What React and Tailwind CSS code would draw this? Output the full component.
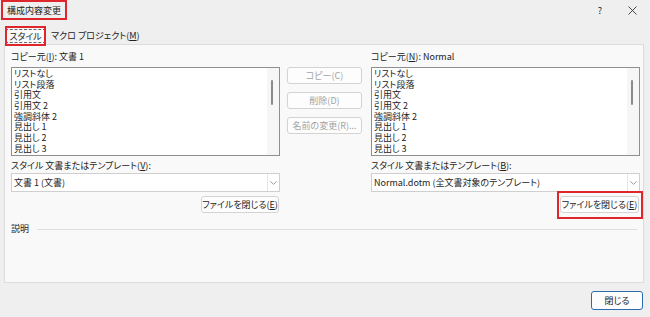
import React from 'react';

const items = ['リストなし', 'リスト段落', '引用文', '引用文 2', '強調斜体 2', '見出し 1', '見出し 2', '見出し 3'];

const StyleList = () => (
  <div className="mt-[4px] h-[89px] border border-[#8e8e8e] bg-white flex">
    <div className="flex-1 pl-[2px] pt-[1px] overflow-hidden">
      {items.map((it) => (
        <div key={it} className="h-[10.7px] leading-[10.7px] whitespace-nowrap">{it}</div>
      ))}
    </div>
    <div className="w-[12px] bg-[#f6f6f6] pl-[4px] pt-[12px]">
      <div className="w-[2px] h-[25px] bg-[#8a8a8a] rounded-full"></div>
    </div>
  </div>
);

const Combo = ({ value }) => (
  <div className="mt-[1px] h-[19px] border border-[#cfcfcf] bg-white flex">
    <div className="flex-1 pl-[2px] leading-[17px] whitespace-nowrap">{value}</div>
    <div className="w-[12px] border-l border-[#e4e4e4] flex items-center justify-center">
      <svg width="7" height="4" viewBox="0 0 7 4" fill="none" stroke="#8d8d8d" strokeWidth="0.9">
        <path d="M0.5 0.5 L3.5 3.3 L6.5 0.5" />
      </svg>
    </div>
  </div>
);

const Btn = ({ children, disabled, className = '' }) => (
  <div
    className={`h-[17px] border border-[#d3d3d3] bg-[#fdfdfd] rounded-[3px] flex items-center justify-center leading-none whitespace-nowrap ${
      disabled ? 'text-[#a3a3a3]' : 'text-[#1b1b1b]'
    } ${className}`}
  >
    {children}
  </div>
);

const App = () => {
  return (
    <div className="w-[650px] h-[317px] bg-[#efefef] flex flex-col text-[9px] text-[#222] font-['Noto_Sans_CJK_JP',sans-serif] [font-feature-settings:'palt']">
      {/* タイトルバー */}
      <div className="h-[22px] flex items-start">
        <div className="ml-[1px] h-[20px] border-2 border-[#e0262d] px-[4px] flex items-center leading-none">
          構成内容変更
        </div>
        <div className="ml-auto flex items-center h-[20px]">
          <span className="text-[9px] leading-none">?</span>
          <svg className="ml-[26px] mr-[13px]" width="9" height="9" viewBox="0 0 9 9" stroke="#333" strokeWidth="0.9">
            <path d="M0.5 0.5 L8.5 8.5 M8.5 0.5 L0.5 8.5" />
          </svg>
        </div>
      </div>

      {/* タブ */}
      <div className="h-[22px] flex items-end pl-[5px]">
        <div className="relative z-10 -mb-[1px] w-[41px] h-[19px] bg-[#f9f9f9] border border-b-0 border-[#dadada] flex items-center justify-center">
          <div className="border border-dashed border-[#666] px-[3px] h-[14px] flex items-center leading-none whitespace-nowrap">スタイル</div>
          <div className="absolute -left-[1px] -right-[1px] -top-[1px] -bottom-[1px] border-2 border-[#e0262d]"></div>
        </div>
        <div className="ml-[2px] h-[17px] px-[3px] flex items-center leading-none whitespace-nowrap">
          マクロ プロジェクト(<span className="underline">M</span>)
        </div>
      </div>

      {/* パネル */}
      <div className="mx-[4px] w-[640px] h-[239px] border border-[#dcdcdc] bg-[#f9f9f9] pl-[6px] flex flex-col">
        <div className="flex items-start">
          <div className="w-[269px] flex flex-col">
            <div className="mt-[6px] h-[12px] leading-[12px]">
              コピー元(<span className="underline">I</span>): 文書 1
            </div>
            <StyleList />
            <div className="mt-[4px] h-[12px] leading-[12px]">
              スタイル 文書またはテンプレート(<span className="underline">V</span>):
            </div>
            <Combo value="文書 1 (文書)" />
            <Btn className="mt-[4px] w-[78px] self-end mr-[1px]">
              ファイルを閉じる(<span className="underline">E</span>)
            </Btn>
          </div>

          <div className="ml-[7px] w-[75px] mt-[22px] flex flex-col gap-[8px]">
            <Btn disabled>コピー(C)</Btn>
            <Btn disabled>削除(D)</Btn>
            <Btn disabled>名前の変更(R)...</Btn>
          </div>

          <div className="ml-[9px] w-[269px] flex flex-col">
            <div className="mt-[6px] h-[12px] leading-[12px]">
              コピー元(<span className="underline">N</span>): Normal
            </div>
            <StyleList />
            <div className="mt-[4px] h-[12px] leading-[12px]">
              スタイル 文書またはテンプレート(<span className="underline">B</span>):
            </div>
            <Combo value="Normal.dotm (全文書対象のテンプレート)" />
            <div className="relative mt-[4px] self-end mr-[1px]">
              <Btn className="w-[79px]">
                ファイルを閉じる(<span className="underline">E</span>)
              </Btn>
              <div className="absolute -left-[3px] -right-[4px] -top-[5px] -bottom-[6px] border-2 border-[#e0262d]"></div>
            </div>
          </div>
        </div>

        <div className="mt-[10px] h-[12px] flex items-center pr-[6px]">
          <span className="leading-[12px]">説明</span>
          <div className="flex-1 ml-[8px] border-t border-[#dedede]"></div>
        </div>
      </div>

      {/* 下部ボタン */}
      <div className="mt-[8px] flex justify-end pr-[7px]">
        <div className="w-[52px] h-[19px] border border-[#2b6cb0] bg-[#fdfdfd] rounded-[3px] flex items-center justify-center leading-none">
          閉じる
        </div>
      </div>
    </div>
  );
};

export default App;
